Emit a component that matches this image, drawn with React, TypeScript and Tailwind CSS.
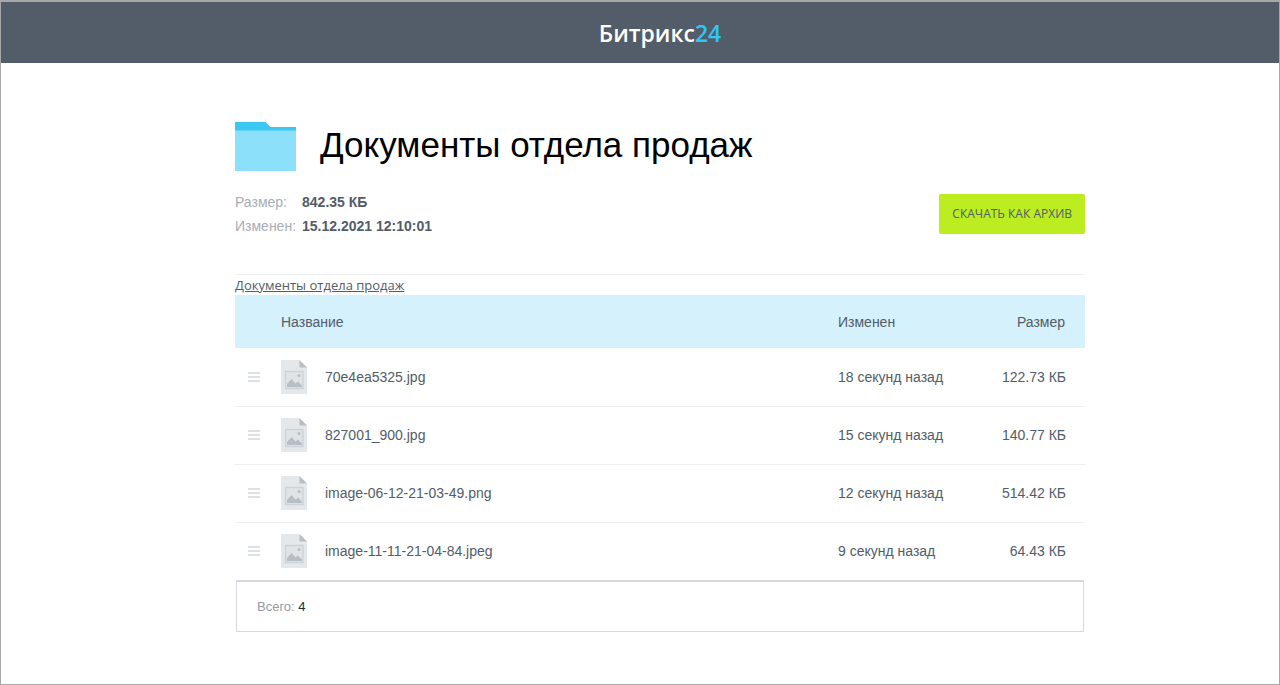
import React from 'react';

const files = [
  { name: '70e4ea5325.jpg', modified: '18 секунд назад', size: '122.73 КБ' },
  { name: '827001_900.jpg', modified: '15 секунд назад', size: '140.77 КБ' },
  { name: 'image-06-12-21-03-49.png', modified: '12 секунд назад', size: '514.42 КБ' },
  { name: 'image-11-11-21-04-84.jpeg', modified: '9 секунд назад', size: '64.43 КБ' },
];

function FolderIcon() {
  return (
    <svg className="h-[49px] w-[61px] shrink-0" viewBox="0 0 61 49" aria-hidden="true">
      <path d="M0 0h30.5l5 5H61v6H0z" fill="#3bc8f5" />
      <path d="M0 8.500h61V49H0z" fill="#8ce0fa" />
    </svg>
  );
}

function ImageFileIcon() {
  return (
    <svg className="block h-[34px] w-[26px]" viewBox="0 0 26 34" aria-hidden="true">
      <path d="M0 0h18.500L26 7.500V34H0z" fill="#e4e8eb" />
      <path d="M18.500 0 26 7.500h-7.500z" fill="#b8bec4" />
      <path d="M4.500 11.500h17.500v17H4.500z" fill="#e0e4e7" stroke="#cdd2d6" strokeWidth="1.300" />
      <path d="M6 27v-3l4.500-5 4 4.500 2.500-2 4 4v1.500z" fill="#b8bec4" />
      <circle cx="18" cy="15.500" r="1.500" fill="#b8bec4" />
    </svg>
  );
}

function MenuIcon() {
  return (
    <svg className="block h-3 w-3" viewBox="0 0 12 12" aria-hidden="true">
      <path d="M0 1h12v2H0zM0 5h12v2H0zM0 9h12v2H0z" fill="#dfe2e5" />
    </svg>
  );
}

export default function App() {
  return (
    <div className="min-h-screen border border-t-2 border-[#a8a8a8] bg-white font-['Liberation_Sans',Arial,sans-serif] text-sm text-[#535c69]">
      <header className="flex h-[61px] items-center justify-center bg-[#535c69] pl-10">
        <a
          href="#"
          className="font-['Open_Sans',sans-serif] text-[23px] leading-8 font-semibold text-white"
        >
          Битрикс<span className="text-[#2fc6f6]">24</span>
        </a>
      </header>

      <main className="pt-[59px] pl-10">
        <div className="mx-auto max-w-[850px]">
          <div className="flex items-start gap-6">
            <FolderIcon />
            <h1 className="text-[35px] leading-[46px] text-black">Документы отдела продаж</h1>
          </div>

          <div className="flex items-center justify-between border-b border-[#eceef0] pt-[19px] pb-9">
            <dl className="grid grid-cols-[auto_auto] gap-x-1.5 leading-6">
              <dt className="text-[#a8adb4]">Размер:</dt>
              <dd className="font-bold">842.35 КБ</dd>
              <dt className="text-[#a8adb4]">Изменен:</dt>
              <dd className="font-bold">15.12.2021 12:10:01</dd>
            </dl>
            <button
              type="button"
              className="h-10 rounded-xs bg-[#bbed21] px-[13px] font-['Open_Sans',sans-serif] text-xs uppercase"
            >
              Скачать как архив
            </button>
          </div>

          <nav className="font-['Open_Sans',sans-serif] text-[13px] leading-5">
            <a href="#" className="underline">
              Документы отдела продаж
            </a>
          </nav>

          <table className="w-full table-fixed">
            <colgroup>
              <col className="w-[46px]" />
              <col className="w-11" />
              <col />
              <col className="w-[130px]" />
              <col className="w-[117px]" />
            </colgroup>
            <thead>
              <tr className="h-[53px] bg-[#d5f1fc] text-left *:font-normal">
                <th></th>
                <th colSpan={2}>Название</th>
                <th>Изменен</th>
                <th className="pr-5 text-right">Размер</th>
              </tr>
            </thead>
            <tbody>
              {files.map((file) => (
                <tr key={file.name} className="h-[58px] border-b border-[#eceef0] last:border-b-0">
                  <td className="pl-[13px]">
                    <MenuIcon />
                  </td>
                  <td>
                    <ImageFileIcon />
                  </td>
                  <td>{file.name}</td>
                  <td>{file.modified}</td>
                  <td className="pr-[19px] text-right">{file.size}</td>
                </tr>
              ))}
            </tbody>
          </table>

          <div className="mx-px border border-t-2 border-[#d5d8dc] px-5 py-4 text-[13px] leading-[17px] text-[#949ba3]">
            Всего: <span className="text-[#0b3347]">4</span>
          </div>
        </div>
      </main>
    </div>
  );
}
